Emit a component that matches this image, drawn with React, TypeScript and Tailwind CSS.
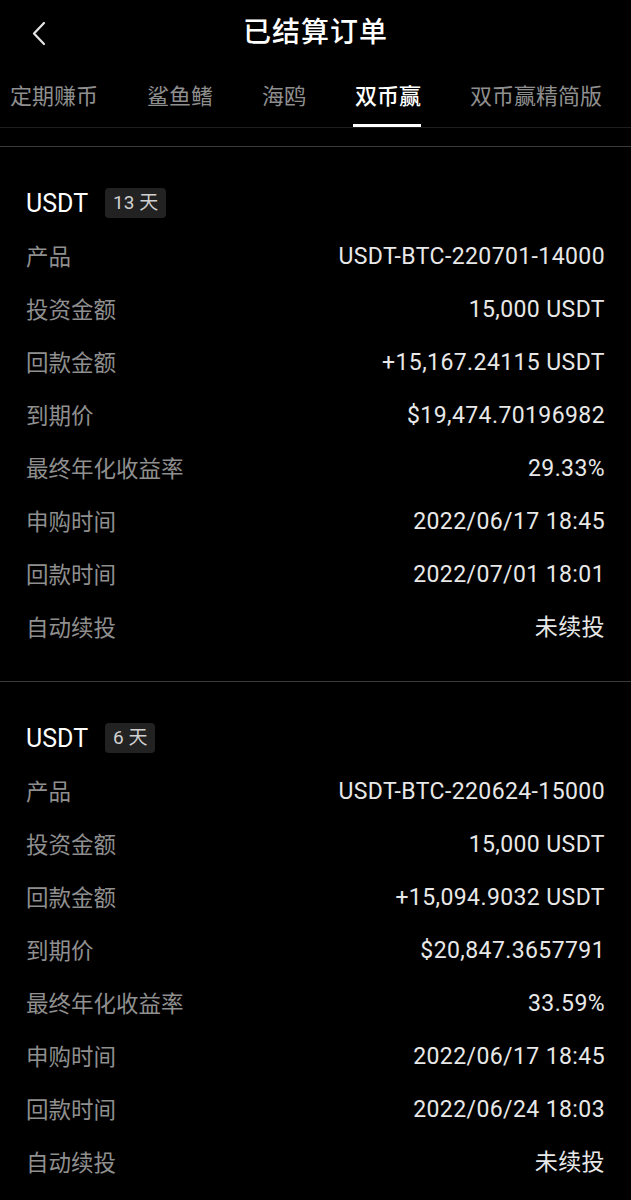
import React from 'react';

type Order = {
  days: string;
  rows: [string, string][];
};

const orders: Order[] = [
  {
    days: '13 天',
    rows: [
      ['产品', 'USDT-BTC-220701-14000'],
      ['投资金额', '15,000 USDT'],
      ['回款金额', '+15,167.24115 USDT'],
      ['到期价', '$19,474.70196982'],
      ['最终年化收益率', '29.33%'],
      ['申购时间', '2022/06/17 18:45'],
      ['回款时间', '2022/07/01 18:01'],
      ['自动续投', '未续投'],
    ],
  },
  {
    days: '6 天',
    rows: [
      ['产品', 'USDT-BTC-220624-15000'],
      ['投资金额', '15,000 USDT'],
      ['回款金额', '+15,094.9032 USDT'],
      ['到期价', '$20,847.3657791'],
      ['最终年化收益率', '33.59%'],
      ['申购时间', '2022/06/17 18:45'],
      ['回款时间', '2022/06/24 18:03'],
      ['自动续投', '未续投'],
    ],
  },
];

const tabs = ['定期赚币', '鲨鱼鳍', '海鸥', '双币赢', '双币赢精简版'];

const font = { fontFamily: 'Roboto, "Noto Sans CJK SC", sans-serif' };

const OrderCard: React.FC<{ order: Order }> = ({ order }) => (
  <div className="border-t border-[#3a3a3a] px-[26px] pt-[41px] pb-[26px]">
    <div className="flex items-center h-[30px]">
      <span className="text-[25px] text-white leading-none">USDT</span>
      <span className="ml-[17px] h-[30px] px-[8px] rounded-[4px] bg-[#222222] text-[#d0d0d0] text-[19px] flex items-center">
        {order.days}
      </span>
    </div>
    <div className="mt-[13px]">
      {order.rows.map(([label, value]) => (
        <div key={label} className="h-[53px] flex items-center justify-between">
          <span className="text-[22.5px] text-[#8f8f8f]">{label}</span>
          <span className="text-[23px] tracking-[0.4px] text-[#e8e8e8]">{value}</span>
        </div>
      ))}
    </div>
  </div>
);

export default function App() {
  return (
    <div className="w-[631px] min-h-[1200px] bg-black overflow-hidden" style={font}>
      <div className="relative h-[66px] flex items-center justify-center">
        <svg className="absolute left-[31px] top-[21px]" width="16" height="25" viewBox="0 0 16 25" fill="none">
          <polyline points="13,2 3,12.5 13,23" stroke="#e5e5e5" strokeWidth="2.2" strokeLinecap="round" strokeLinejoin="round" />
        </svg>
        <span className="text-[28px] font-medium text-white tracking-[1px]">已结算订单</span>
      </div>
      <div className="h-[62px] flex pl-[10px] gap-[49px] border-b border-[#1e1e1e]">
        {tabs.map((t) => (
          <div key={t} className="relative flex items-center">
            <span className={t === '双币赢' ? 'text-[22px] text-white font-medium' : 'text-[22px] text-[#8f8f8f]'}>
              {t}
            </span>
            {t === '双币赢' && <div className="absolute left-[-2px] right-0 bottom-0 h-[3px] bg-white" />}
          </div>
        ))}
      </div>
      <div className="h-[18px]" />
      {orders.map((o, i) => (
        <OrderCard key={i} order={o} />
      ))}
    </div>
  );
}
